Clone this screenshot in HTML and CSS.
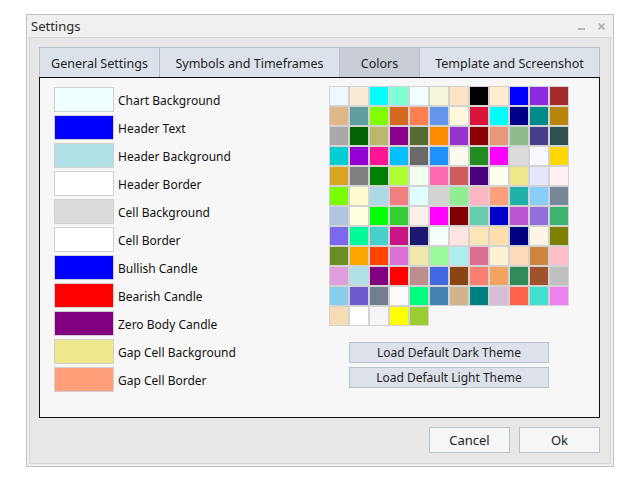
FILE: index.html
```html
<!DOCTYPE html>
<html lang="en">
<head>
  <meta charset="UTF-8" />
  <meta name="viewport" content="width=device-width, initial-scale=1.0"/>
  <title>Settings</title>
  <link rel="stylesheet" href="styles.css">
</head>
<body>
  <div class="window">
    <!-- ================== Title bar ================== -->
    <div class="titlebar">
      <span class="title">Settings</span>
      <span class="win-buttons">
        <svg class="win-min" width="7" height="7" viewBox="0 0 7 7"><rect x="0" y="5" width="7" height="2" fill="#b4b4b4"/></svg>
        <svg class="win-close" width="7" height="7" viewBox="0 0 7 7"><path d="M0.5 0.5 L6.5 6.5 M6.5 0.5 L0.5 6.5" stroke="#b4b4b4" stroke-width="1.8"/></svg>
      </span>
    </div>

    <div class="client">
      <!-- ================== Tabs ================== -->
      <div class="tabs">
        <div class="tab tab-general">General Settings</div>
        <div class="tab tab-symbols">Symbols and Timeframes</div>
        <div class="tab tab-colors active">Colors</div>
        <div class="tab tab-template">Template and Screenshot</div>
      </div>

      <!-- ================== Colors panel ================== -->
      <div class="panel">
        <div class="color-list">
          <div class="color-row"><span class="swatch sw-chart-bg"></span><span class="color-name">Chart Background</span></div>
          <div class="color-row"><span class="swatch sw-header-text"></span><span class="color-name">Header Text</span></div>
          <div class="color-row"><span class="swatch sw-header-bg"></span><span class="color-name">Header Background</span></div>
          <div class="color-row"><span class="swatch sw-header-border"></span><span class="color-name">Header Border</span></div>
          <div class="color-row"><span class="swatch sw-cell-bg"></span><span class="color-name">Cell Background</span></div>
          <div class="color-row"><span class="swatch sw-cell-border"></span><span class="color-name">Cell Border</span></div>
          <div class="color-row"><span class="swatch sw-bullish"></span><span class="color-name">Bullish Candle</span></div>
          <div class="color-row"><span class="swatch sw-bearish"></span><span class="color-name">Bearish Candle</span></div>
          <div class="color-row"><span class="swatch sw-zero"></span><span class="color-name">Zero Body Candle</span></div>
          <div class="color-row"><span class="swatch sw-gap-bg"></span><span class="color-name">Gap Cell Background</span></div>
          <div class="color-row"><span class="swatch sw-gap-border"></span><span class="color-name">Gap Cell Border</span></div>
        </div>

        <div class="palette-col">
          <div id="palette" class="palette"></div>
          <button class="theme-btn">Load Default Dark Theme</button>
          <button class="theme-btn">Load Default Light Theme</button>
        </div>
      </div>

      <!-- ================== Dialog buttons ================== -->
      <div class="footer">
        <button class="dlg-btn">Cancel</button>
        <button class="dlg-btn">Ok</button>
      </div>
    </div>
  </div>

  <script>
    // ============================================================
    // Build the colour palette from the web colour names
    // ============================================================
    const colorNames = [
      "aliceblue","antiquewhite","aqua","aquamarine","azure","beige","bisque","black","blanchedalmond","blue","blueviolet","brown",
      "burlywood","cadetblue","chartreuse","chocolate","coral","cornflowerblue","cornsilk","crimson","cyan","darkblue","darkcyan","darkgoldenrod",
      "darkgray","darkgreen","darkkhaki","darkmagenta","darkolivegreen","darkorange","darkorchid","darkred","darksalmon","darkseagreen","darkslateblue","darkslategray",
      "darkturquoise","darkviolet","deeppink","deepskyblue","dimgray","dodgerblue","floralwhite","forestgreen","fuchsia","gainsboro","ghostwhite","gold",
      "goldenrod","gray","green","greenyellow","honeydew","hotpink","indianred","indigo","ivory","khaki","lavender","lavenderblush",
      "lawngreen","lemonchiffon","lightblue","lightcoral","lightcyan","lightgray","lightgreen","lightpink","lightsalmon","lightseagreen","lightskyblue","lightslategray",
      "lightsteelblue","lightyellow","lime","limegreen","linen","magenta","maroon","mediumaquamarine","mediumblue","mediumorchid","mediumpurple","mediumseagreen",
      "mediumslateblue","mediumspringgreen","mediumturquoise","mediumvioletred","midnightblue","mintcream","mistyrose","moccasin","navajowhite","navy","oldlace","olive",
      "olivedrab","orange","orangered","orchid","palegoldenrod","palegreen","paleturquoise","palevioletred","papayawhip","peachpuff","peru","pink",
      "plum","powderblue","purple","red","rosybrown","royalblue","saddlebrown","salmon","sandybrown","seagreen","sienna","silver",
      "skyblue","slateblue","slategray","snow","springgreen","steelblue","tan","teal","thistle","tomato","turquoise","violet",
      "wheat","white","whitesmoke","yellow","yellowgreen"
    ];

    const palette = document.getElementById("palette");
    colorNames.forEach(name => {
      const cell = document.createElement("span");
      cell.className = "pal-cell";
      cell.title = name;
      cell.style.backgroundColor = name;
      palette.appendChild(cell);
    });
  </script>
</body>
</html>
```

FILE: styles.css
```css
body {
  margin: 0;
  background-color: #ffffff;
  font-family: "Noto Sans", "DejaVu Sans", sans-serif;
  color: #1e1e1e;
}
.window {
  box-sizing: border-box;
  width: 588px;
  height: 453px;
  margin: 14px 0 0 26px;
  border: 1px solid #c2c2c2;
  background-color: #f0f0f0;
  display: flex;
  flex-direction: column;
}
.titlebar {
  height: 22px;
  display: flex;
  align-items: center;
  justify-content: space-between;
  padding: 0 8px 0 4px;
}
.title {
  font-size: 13px;
  color: #2a2a2a;
}
.win-buttons {
  display: flex;
  gap: 13px;
  align-items: center;
}
.client {
  flex: 1;
  margin: 0 2px 2px 2px;
  border: 1px solid #d6d6d6;
  background-color: #e7e7e7;
  padding: 9px 0 0 9px;
}
.tabs {
  display: flex;
  height: 30px;
}
.tab {
  box-sizing: border-box;
  height: 30px;
  margin-right: -1px;
  padding-top: 1px;
  border: 1px solid #b6c0cc;
  border-bottom: none;
  background-color: #dce2ea;
  font-size: 12.5px;
  color: #222;
  display: flex;
  align-items: center;
  justify-content: center;
}
.tab.active {
  background-color: #c8cdd6;
}
.tab-general { width: 121px; }
.tab-symbols { width: 181px; }
.tab-colors { width: 81px; }
.tab-template { width: 181px; }
.panel {
  box-sizing: border-box;
  width: 561px;
  height: 341px;
  border: 1px solid #111;
  background-color: #f7f7f7;
  padding: 8px 0 0 14px;
  display: flex;
}
.color-list {
  width: 275px;
  padding-top: 1px;
  display: flex;
  flex-direction: column;
  gap: 3px;
}
.color-row {
  display: flex;
  align-items: center;
  height: 25px;
}
.swatch {
  box-sizing: border-box;
  width: 60px;
  height: 25px;
  border: 1px solid #d0d0d0;
  margin-right: 4px;
}
.color-name {
  font-size: 12px;
  color: #111;
  padding-top: 2px;
}
.sw-chart-bg { background-color: #f0ffff; }
.sw-header-text { background-color: #0000ff; }
.sw-header-bg { background-color: #b0e0e6; }
.sw-header-border { background-color: #ffffff; }
.sw-cell-bg { background-color: #dcdcdc; }
.sw-cell-border { background-color: #ffffff; }
.sw-bullish { background-color: #0000ff; }
.sw-bearish { background-color: #ff0000; }
.sw-zero { background-color: #800080; }
.sw-gap-bg { background-color: #f0e68c; }
.sw-gap-border { background-color: #ffa07a; }
.palette-col {
  display: flex;
  flex-direction: column;
}
.palette {
  width: 240px;
  display: flex;
  flex-wrap: wrap;
  margin-bottom: 16px;
}
.pal-cell {
  box-sizing: border-box;
  width: 20px;
  height: 20px;
  border: 1px solid #d3d3d3;
}
.theme-btn {
  box-sizing: border-box;
  width: 200px;
  height: 21px;
  margin: 0 0 4px 20px;
  padding: 0;
  border: 1px solid #b6c2d0;
  background-color: #dde2ea;
  font-family: inherit;
  font-size: 12px;
  color: #1e1e1e;
}
.footer {
  width: 561px;
  display: flex;
  justify-content: flex-end;
  gap: 9px;
  margin-top: 9px;
}
.dlg-btn {
  box-sizing: border-box;
  width: 81px;
  height: 26px;
  padding: 0;
  border: 1px solid #b9c3ce;
  background-color: #f5f6f8;
  font-family: inherit;
  font-size: 13px;
  color: #222;
}
```
